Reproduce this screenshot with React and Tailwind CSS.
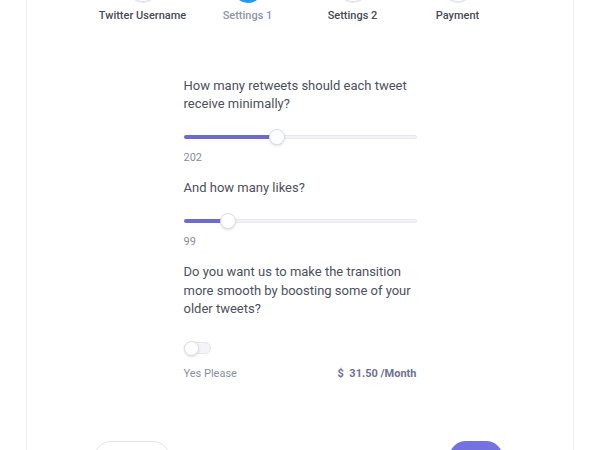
import React from 'react';

const steps = [
  { label: 'Twitter Username', active: false },
  { label: 'Settings 1', active: true },
  { label: 'Settings 2', active: false },
  { label: 'Payment', active: false },
];

const Slider = ({ percent }) => (
  <div className="relative h-4 flex items-center">
    <div className="w-full h-[4px] rounded-full bg-[#f1f3f8] border border-[#e6e9f0]" />
    <div
      className="absolute left-0 h-[4px] rounded-full bg-[#6b6ccd]"
      style={{ width: `${percent}%` }}
    />
    <div
      className="absolute w-4 h-4 -ml-2 rounded-full bg-white border border-[#dcdfe7] shadow-sm"
      style={{ left: `${percent}%` }}
    />
  </div>
);

export default function App() {
  return (
    <div className="h-[450px] overflow-hidden bg-white" style={{ fontFamily: 'Roboto, "Liberation Sans", sans-serif' }}>
      <div className="mx-[26px] border-x border-[#eceef2] h-[520px] -mt-[27px]">
        {/* stepper */}
        <div className="w-[420px] mx-auto grid grid-cols-4">
          {steps.map((s) => (
            <div key={s.label} className="flex flex-col items-center">
              <div
                className={`w-[30px] h-[30px] rounded-full ${
                  s.active ? 'bg-[#1e9bf0]' : 'bg-white border-2 border-[#e4e7ee]'
                }`}
              />
              <div
                className={`mt-[6px] text-[11px] leading-[14px] font-medium ${
                  s.active ? 'text-[#8f93aa]' : 'text-[#474a57]'
                }`}
              >
                {s.label}
              </div>
            </div>
          ))}
        </div>

        {/* form */}
        <div className="w-[233px] mx-auto mt-[54px] text-[13px] text-[#4d505e]">
          <p className="leading-[18px]">How many retweets should each tweet receive minimally?</p>
          <div className="mt-4">
            <Slider percent={40} />
          </div>
          <div className="mt-[6px] text-[11px] leading-[14px] text-[#8c8f9c]">202</div>

          <p className="mt-[14px] leading-[18px]">And how many likes?</p>
          <div className="mt-4">
            <Slider percent={19} />
          </div>
          <div className="mt-[6px] text-[11px] leading-[14px] text-[#8c8f9c]">99</div>

          <p className="mt-[14px] leading-[18.5px]">
            Do you want us to make the transition more smooth by boosting some of your older tweets?
          </p>

          <div className="mt-[22px] relative w-[27px] h-[15px] flex items-center">
            <div className="w-full h-[12px] rounded-full bg-[#f3f4f7] border border-[#e3e5eb]" />
            <div className="absolute left-0 w-[15px] h-[15px] rounded-full bg-white border border-[#dcdee5] shadow" />
          </div>

          <div className="mt-[11px] flex justify-between items-center text-[11px] leading-[14px]">
            <span className="text-[#8a8eab]">Yes Please</span>
            <span className="font-bold text-[#6e7097]">$&nbsp; 31.50 /Month</span>
          </div>
        </div>

        {/* buttons */}
        <div className="mt-[60px] flex justify-between px-[67px] pr-[70px]">
          <button className="w-[76px] h-[34px] rounded-full border border-[#e2e4ea] bg-white text-[12px] text-[#8a8ea6]">
            Previous
          </button>
          <button className="w-[54px] h-[34px] rounded-full bg-[#7472e0] text-[12px] text-white">
            Next
          </button>
        </div>
      </div>
    </div>
  );
}
